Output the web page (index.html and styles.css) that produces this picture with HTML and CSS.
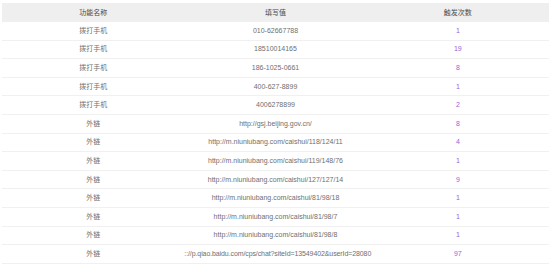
FILE: index.html
```html
<!DOCTYPE html>
<html lang="zh-CN">
<head>
    <meta charset="UTF-8">
    <title>功能统计</title>
    <link rel="stylesheet" href="styles.css">
</head>
<body>
    <table class="stats-table">
        <thead>
            <tr>
                <th>功能名称</th>
                <th>填写值</th>
                <th>触发次数</th>
            </tr>
        </thead>
        <tbody>
            <tr><td>拨打手机</td><td>010-62667788</td><td class="count">1</td></tr>
            <tr><td>拨打手机</td><td>18510014165</td><td class="count">19</td></tr>
            <tr><td>拨打手机</td><td>186-1025-0661</td><td class="count">8</td></tr>
            <tr><td>拨打手机</td><td>400-627-8899</td><td class="count">1</td></tr>
            <tr><td>拨打手机</td><td>4006278899</td><td class="count">2</td></tr>
            <tr><td>外链</td><td>http://gsj.beijing.gov.cn/</td><td class="count">8</td></tr>
            <tr><td>外链</td><td>http://m.niuniubang.com/caishui/118/124/11</td><td class="count">4</td></tr>
            <tr><td>外链</td><td>http://m.niuniubang.com/caishui/119/148/76</td><td class="count">1</td></tr>
            <tr><td>外链</td><td>http://m.niuniubang.com/caishui/127/127/14</td><td class="count">9</td></tr>
            <tr><td>外链</td><td>http://m.niuniubang.com/caishui/81/98/18</td><td class="count">1</td></tr>
            <tr><td>外链</td><td>http://m.niuniubang.com/caishui/81/98/7</td><td class="count">1</td></tr>
            <tr><td>外链</td><td>http://m.niuniubang.com/caishui/81/98/8</td><td class="count">1</td></tr>
            <tr><td>外链</td><td class="long">:://p.qiao.baidu.com/cps/chat?siteId=13549402&amp;userId=28080</td><td class="count">97</td></tr>
        </tbody>
    </table>
</body>
</html>
```

FILE: styles.css
```css
/* Page */
body {
    margin: 0;
    padding: 3px 4px 0 2px;
    background-color: #ffffff;
    font-family: 'Liberation Sans', Arial, 'Noto Sans CJK SC', sans-serif;
    overflow: hidden;
}

/* Table */
.stats-table {
    width: 547px;
    border-collapse: collapse;
    table-layout: fixed;
    font-size: 7px;
    line-height: 10px;
    color: #6f6f6f;
}

.stats-table th,
.stats-table td {
    padding: 0;
    text-align: center;
    white-space: nowrap;
    font-weight: normal;
}

.stats-table th {
    height: 19px;
    background-color: #efefef;
    color: #4a4a4a;
}

.stats-table td {
    height: 17.6px;
    border-bottom: 1px solid #f0f0f0;
}

.stats-table td.long {
    letter-spacing: -0.1px;
}

.stats-table td.count {
    color: #9b5fd9;
}
```
